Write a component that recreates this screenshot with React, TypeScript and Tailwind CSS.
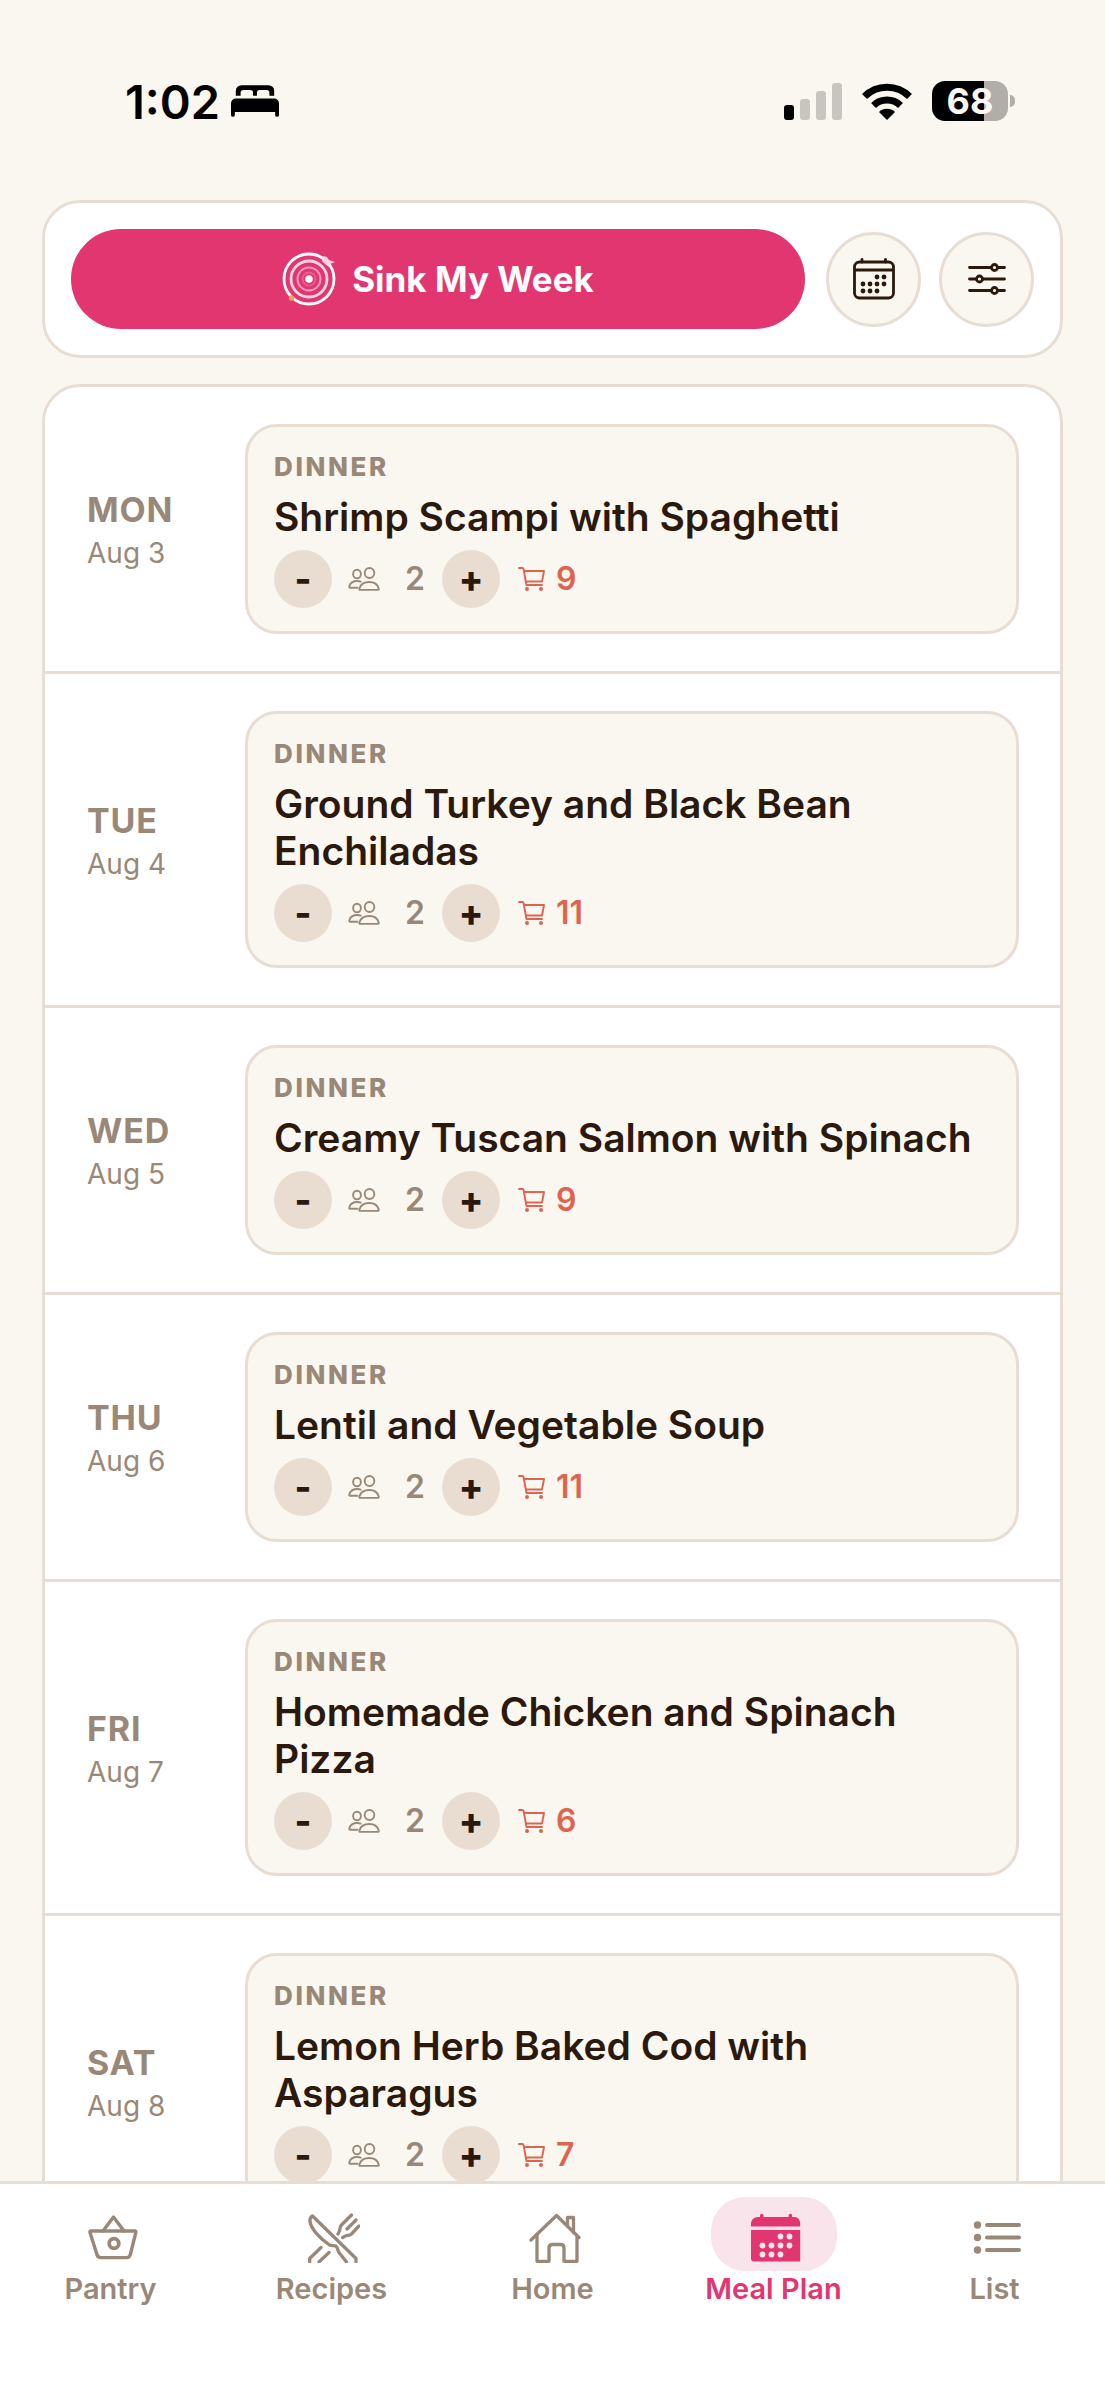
import type { ReactNode } from 'react'

type Meal = { day: string; date: string; title: string; servings: number; missing: number }

const meals: Meal[] = [
  { day: 'MON', date: 'Aug 3', title: 'Shrimp Scampi with Spaghetti', servings: 2, missing: 9 },
  { day: 'TUE', date: 'Aug 4', title: 'Ground Turkey and Black Bean Enchiladas', servings: 2, missing: 11 },
  { day: 'WED', date: 'Aug 5', title: 'Creamy Tuscan Salmon with Spinach', servings: 2, missing: 9 },
  { day: 'THU', date: 'Aug 6', title: 'Lentil and Vegetable Soup', servings: 2, missing: 11 },
  { day: 'FRI', date: 'Aug 7', title: 'Homemade Chicken and Spinach Pizza', servings: 2, missing: 6 },
  { day: 'SAT', date: 'Aug 8', title: 'Lemon Herb Baked Cod with Asparagus', servings: 2, missing: 7 },
]

function BedIcon() {
  return (
    <svg width="48" height="33" viewBox="0 0 50 34" fill="currentColor" aria-hidden="true">
      <path d="M5 11V6a6 6 0 0 1 6-6h28a6 6 0 0 1 6 6v5h-5V8a3 3 0 0 0-3-3h-7a3 3 0 0 0-3 3v3h-4V8a3 3 0 0 0-3-3h-7a3 3 0 0 0-3 3v3z" />
      <path d="M0 19a5 5 0 0 1 5-5h40a5 5 0 0 1 5 5v12a2 2 0 0 1-4 0v-3H4v3a2 2 0 0 1-4 0z" />
    </svg>
  )
}

function SignalIcon() {
  return (
    <svg width="58" height="37" viewBox="0 0 58 37" aria-hidden="true">
      <rect x="0" y="22" width="10" height="15" rx="3" fill="#000" />
      <rect x="16" y="16" width="10" height="21" rx="3" fill="#c8c5c0" />
      <rect x="32" y="8" width="10" height="29" rx="3" fill="#c8c5c0" />
      <rect x="48" y="0" width="10" height="37" rx="3" fill="#c8c5c0" />
    </svg>
  )
}

function WifiIcon() {
  return (
    <svg width="50" height="37" viewBox="0 0 50 37" aria-hidden="true">
      <path d="M25 37l-8-8a11.300 11.300 0 0 1 16 0z" fill="#000" />
      <path d="M11.500 22.500a19.500 19.500 0 0 1 27 0" fill="none" stroke="#000" strokeWidth="7" />
      <path d="M2.500 13.500a32 32 0 0 1 45 0" fill="none" stroke="#000" strokeWidth="7" />
    </svg>
  )
}

function Battery() {
  return (
    <div className="flex items-center gap-[2px]">
      <div className="flex h-10 w-[76px] items-center justify-center rounded-[13px] bg-linear-to-r from-black from-68% to-[#b1aea9] to-68%">
        <span className="text-[36px] font-bold text-[#faf7f1]">68</span>
      </div>
      <div className="h-3 w-[5px] rounded-r-full bg-[#b1aea9]" />
    </div>
  )
}

function TargetIcon() {
  return (
    <svg width="54" height="54" viewBox="0 0 54 54" fill="none" stroke="#fff" aria-hidden="true">
      <circle cx="27" cy="27" r="25" strokeWidth="2.800" />
      <circle cx="27" cy="27" r="18" strokeWidth="2.800" opacity="0.8" />
      <circle cx="27" cy="27" r="11.500" strokeWidth="2" opacity="0.5" />
      <circle cx="27" cy="27" r="6.500" strokeWidth="2" opacity="0.2" />
      <circle cx="27" cy="27" r="3.800" fill="#fff" stroke="none" />
      <path d="M41 4l4 1 2 3 6 2-5 2-1 3-4-3-3-3z" fill="#fbd5e2" stroke="none" />
      <circle cx="9.500" cy="46" r="2.800" fill="#f0a05a" stroke="none" />
    </svg>
  )
}

const calendarDots = [
  [24, 18], [31, 18],
  [10, 25], [17, 25], [24, 25], [31, 25],
  [10, 32], [17, 32], [24, 32],
]

function CalendarIcon() {
  return (
    <svg width="42" height="42" viewBox="0 0 42 42" fill="none" stroke="currentColor" strokeWidth="2.800" strokeLinecap="round" aria-hidden="true">
      <rect x="1.500" y="4" width="39" height="36" rx="5" />
      <path d="M2 12h38M9 1.500V4M32.500 1.500V4" />
      <g fill="currentColor" stroke="none">
        {calendarDots.map(([x, y]) => (
          <circle key={`${x}-${y}`} cx={x} cy={y + 1} r="2.400" />
        ))}
      </g>
    </svg>
  )
}

function SlidersIcon() {
  return (
    <svg width="38" height="32" viewBox="0 0 38 32" fill="none" stroke="currentColor" strokeWidth="2.800" strokeLinecap="round" aria-hidden="true">
      <path d="M1.500 4.500h21M30 4.500h6.500M1.500 16h6M15 16h21.500M1.500 27.500h21M30 27.500h6.500" />
      <circle cx="26.500" cy="4.500" r="3" />
      <circle cx="11.500" cy="16" r="3" />
      <circle cx="26.500" cy="27.500" r="3" />
    </svg>
  )
}

function PeopleIcon() {
  return (
    <svg width="32" height="24" viewBox="0 0 32 24" fill="none" stroke="currentColor" strokeWidth="1.900" strokeLinecap="round" strokeLinejoin="round" aria-hidden="true">
      <ellipse cx="9" cy="7" rx="3.900" ry="4.300" />
      <ellipse cx="21.500" cy="6" rx="4.800" ry="5" />
      <path d="M11.800 22.900c-.6 0-.6-.8-.4-1.500C12.500 17.500 16.500 15 21.300 15s8.300 2.500 9.400 6.400c.2.700.1 1.500-.6 1.500z" />
      <path d="M9.500 20.800H1.800c-.6 0-.8-.8-.5-1.500 1-3.300 4-5.300 7.900-5.300 1.300 0 2.500.2 3.500.6" />
    </svg>
  )
}

function CartIcon() {
  return (
    <svg width="27" height="24" viewBox="0 0 27 24" fill="none" stroke="currentColor" strokeWidth="1.900" strokeLinecap="round" strokeLinejoin="round" aria-hidden="true">
      <path d="M1 1h3.500c.6 0 .9.300 1 .8L8.500 18H24M5.900 4H26l-2 10.500H8" />
      <circle cx="9" cy="22" r="2" fill="currentColor" stroke="none" />
      <circle cx="23" cy="22" r="2" fill="currentColor" stroke="none" />
    </svg>
  )
}

function BasketIcon() {
  return (
    <svg width="50" height="50" viewBox="0 0 50 50" fill="none" stroke="currentColor" strokeWidth="3.400" strokeLinecap="round" strokeLinejoin="round" aria-hidden="true">
      <path d="M3 18h44c.7 0 1 .5.900 1.200L42.500 41c-.5 2.500-1.600 3.600-4 3.600H13c-2.500 0-3.600-1-4.200-3.600L2 19.500C1.800 18.600 2 18 3 18z" />
      <path d="M15 18L25.500 4 36 18" />
      <circle cx="26" cy="30.500" r="4.800" strokeWidth="3.800" />
    </svg>
  )
}

function UtensilsIcon() {
  return (
    <svg width="52" height="50" viewBox="0 0 52 50" fill="none" stroke="currentColor" strokeWidth="3.300" strokeLinejoin="round" strokeLinecap="round" aria-hidden="true">
      <path d="M38.500 49L31 39.500c-1.800-2.200-.8-5-3.300-6.500-2-1-4 .2-6.200-1C12 25.500 3 16 2 8.500c-.3-2.500.8-4.500 2.500-5.500L48 45.500V49" />
      <path d="M1.700 49v-3.500L13 34.500M11 49l10-9.500" />
      <path d="M43.500 2L33 12.500c-1.500 2-.5 4-2 6.500l-1 2M48 7l-9 9M51 13l-7.500 8c-2.500 2-4.500 1-7 2.500l-1.800 1" />
    </svg>
  )
}

function HomeIcon() {
  return (
    <svg width="52" height="50" viewBox="0 0 52 50" fill="none" stroke="currentColor" strokeWidth="3.300" strokeLinecap="round" strokeLinejoin="round" aria-hidden="true">
      <path d="M2 27L27.500 2.500 50 24.500" />
      <path d="M38.500 12V4.500h6v15" />
      <path d="M8 22v26.300h12V35c0-2 1.200-3.500 3.500-3.500h8c2.300 0 3.500 1.500 3.500 3.500v13.300h13V23" />
    </svg>
  )
}

function CalendarFilledIcon() {
  return (
    <svg width="50" height="50" viewBox="0 0 50 50" fill="currentColor" aria-hidden="true">
      <path d="M0 13.500V11c0-4 3-7 7-7h2V2.500a1.800 1.800 0 0 1 3.600 0V4h25V2.500a1.800 1.800 0 0 1 3.600 0V4h2c4 0 6 3 6 7v2.500z" />
      <path d="M0 17h49.200v31.500H3c-2 0-3-1-3-3z" />
      <g fill="#fae4ec">
        {calendarDots.map(([x, y]) => (
          <circle key={`${x}-${y}`} cx={11.500 + ((x - 10) / 7) * 9} cy={23.500 + ((y - 18) / 7) * 9} r="2.900" />
        ))}
      </g>
    </svg>
  )
}

function ListIcon() {
  return (
    <svg width="50" height="50" viewBox="0 0 50 50" fill="currentColor" stroke="currentColor" strokeWidth="4" strokeLinecap="round" aria-hidden="true">
      <path d="M15 12h32M15 24.500h32M15 37h32" />
      <g stroke="none">
        <circle cx="5.500" cy="12" r="3.700" />
        <circle cx="5.500" cy="24.500" r="3.700" />
        <circle cx="5.500" cy="37" r="3.700" />
      </g>
    </svg>
  )
}

function RoundButton({ label, children }: { label: string; children: ReactNode }) {
  return (
    <button
      aria-label={label}
      className="flex size-[95px] shrink-0 items-center justify-center rounded-full border-3 border-[#e8ddd2] bg-[#faf7f1]"
    >
      {children}
    </button>
  )
}

function StepButton({ label, children }: { label: string; children: ReactNode }) {
  return (
    <button
      aria-label={label}
      className="size-[58px] rounded-full bg-[#e9ddd2] text-[36px] leading-10 font-extrabold text-[#2b190e]"
    >
      {children}
    </button>
  )
}

function MealRow({ meal }: { meal: Meal }) {
  return (
    <li className="flex items-center border-b-3 border-[#e8ddd2] py-[37px] pr-[41px] pl-[42px]">
      <div className="w-[158px] shrink-0 pt-1 text-[#998878]">
        <p className="text-[34px] leading-[44px] font-bold tracking-wide">{meal.day}</p>
        <p className="text-[28px] leading-[42px]">{meal.date}</p>
      </div>

      <div className="min-w-0 flex-1 rounded-[32px] border-3 border-[#e8ddd2] bg-[#faf7f1] px-[26px] pt-6 pb-[23px]">
        <p className="text-[26px] leading-8 font-extrabold tracking-widest text-[#998878]">DINNER</p>
        <h2 className="my-[10px] text-[39px] leading-[47px] font-semibold">{meal.title}</h2>
        <div className="flex items-center text-[32px] leading-10 font-semibold text-[#998878]">
          <StepButton label="Fewer servings">-</StepButton>
          <span className="ml-4">
            <PeopleIcon />
          </span>
          <span className="w-[62px] pl-2 text-center">{meal.servings}</span>
          <StepButton label="More servings">+</StepButton>
          <a href="#list" className="ml-[18px] flex items-center gap-[11px] text-[#df6450]">
            <CartIcon />
            {meal.missing}
          </a>
        </div>
      </div>
    </li>
  )
}

const tabs = [
  { label: 'Pantry', icon: <BasketIcon /> },
  { label: 'Recipes', icon: <UtensilsIcon /> },
  { label: 'Home', icon: <HomeIcon /> },
  { label: 'Meal Plan', icon: <CalendarFilledIcon />, active: true },
  { label: 'List', icon: <ListIcon /> },
]

export default function App() {
  return (
    <div className="flex h-screen flex-col bg-[#faf7f1] font-['Inter',sans-serif] text-[#2b190e]">
      {/* Status bar */}
      <header className="flex h-[200px] shrink-0 items-center justify-between pt-[2px] pr-[90px] pl-[125px] text-black">
        <div className="flex items-center gap-[11px]">
          <span className="text-[47px] leading-none font-semibold">1:02</span>
          <BedIcon />
        </div>
        <div className="flex items-center gap-5">
          <SignalIcon />
          <WifiIcon />
          <Battery />
        </div>
      </header>

      <main className="min-h-0 flex-1 overflow-hidden px-[42px]">
        {/* Actions */}
        <div className="mb-[26px] flex items-center rounded-[38px] border-3 border-[#e8ddd2] bg-white p-[26px]">
          <button className="flex h-[100px] flex-1 items-center justify-center gap-4 rounded-full bg-[#e23670] text-[35px] font-bold text-white">
            <TargetIcon />
            Sink My Week
          </button>
          <div className="ml-[21px] flex gap-[18px]">
            <RoundButton label="Open calendar">
              <CalendarIcon />
            </RoundButton>
            <RoundButton label="Filters">
              <SlidersIcon />
            </RoundButton>
          </div>
        </div>

        {/* Week */}
        <ul className="rounded-[38px] border-3 border-[#e8ddd2] bg-white">
          {meals.map((meal) => (
            <MealRow key={meal.day} meal={meal} />
          ))}
        </ul>
      </main>

      {/* Tab bar */}
      <nav className="grid h-[219px] shrink-0 grid-cols-5 items-start border-t-3 border-[#e8ddd2] bg-white pt-[13px]">
        {tabs.map(({ label, icon, active }) => (
          <a
            key={label}
            href="#"
            aria-current={active ? 'page' : undefined}
            className={`flex flex-col items-center text-[29px] leading-9 font-semibold ${active ? 'text-[#e23670]' : 'text-[#998878]'}`}
          >
            <span
              className={`flex h-[74px] w-[126px] items-center justify-center rounded-[34px] pt-2 pl-[5px] ${active ? 'bg-[#fae4ec]' : ''}`}
            >
              {icon}
            </span>
            {label}
          </a>
        ))}
      </nav>
    </div>
  )
}
